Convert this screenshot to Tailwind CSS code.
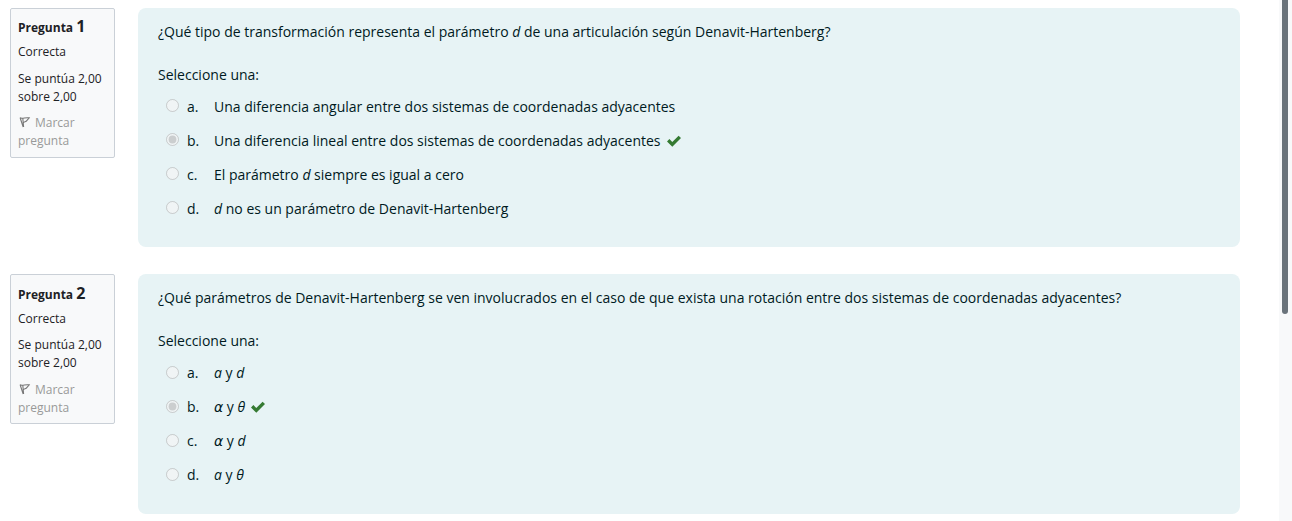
<!DOCTYPE html>
<html lang="es">
<head>
<meta charset="utf-8">
<meta name="viewport" content="width=device-width, initial-scale=1">
<title>Cuestionario</title>
<script src="https://cdn.jsdelivr.net/npm/@tailwindcss/browser@4"></script>
</head>
<body class="flex min-h-screen bg-white font-['Segoe_UI','Open_Sans',sans-serif] text-[14px] text-[#001a1e]">
<svg class="hidden" aria-hidden="true">
  <symbol id="flag" viewBox="0 0 12 12"><path d="M1.200 2 4.200 11M3.800 2.200 4.600 11M.8 1.800C3.500 3.200 6.500 1 10.200 1.900L8 4.400C7 5.800 6 5.600 4.500 6.600" fill="none" stroke="currentColor" stroke-width="1.100"/></symbol>
  <symbol id="check" viewBox="0 0 14 12"><path d="M0 6.500 2.400 4.100 5.300 7 11.600.7 14 3.100 5.300 11.800Z" fill="currentColor"/></symbol>
</svg>
<main class="flex min-w-0 flex-1 flex-col gap-[27px] pt-2 pr-[39px] pb-[7px] pl-[10px]">
  <section class="flex items-start gap-[23px]">
    <div class="w-[105px] shrink-0 rounded-xs border border-[#cad0d7] bg-[#f8f9fa] px-[7px] pt-[5px] pb-[7px] text-[12px] leading-[18px] text-[#1d2125]">
      <h3 class="font-bold leading-6">Pregunta <span class="text-[16px]">1</span></h3>
      <div class="mt-[3px]">Correcta</div>
      <div class="mt-[9px]">Se puntúa 2,00 sobre 2,00</div>
      <a href="#" class="mt-2 block text-[#999]"><svg class="mr-1 ml-px inline size-3 align-[-1px] text-[#777]"><use href="#flag"/></svg>Marcar pregunta</a>
    </div>
    <div class="min-w-0 flex-1 rounded-lg bg-[#e7f3f5] px-5 pt-3 pb-[21px] leading-6">
      <p>¿Qué tipo de transformación representa el parámetro <i>d</i> de una articulación según Denavit-Hartenberg?</p>
      <fieldset class="mt-[19px]">
        <legend class="mb-[3px]">Seleccione una:</legend>
        <div class="flex h-[34px] items-center pl-2"><input id="q1a" name="q1" type="radio" disabled class="mr-2 mb-[3px] size-[13px]"><label for="q1a" class="flex"><span class="w-[27px]">a.</span><span>Una diferencia angular entre dos sistemas de coordenadas adyacentes</span></label></div>
        <div class="flex h-[34px] items-center pl-2"><input id="q1b" name="q1" type="radio" disabled checked class="mr-2 mb-[3px] size-[13px]"><label for="q1b" class="flex"><span class="w-[27px]">b.</span><span>Una diferencia lineal entre dos sistemas de coordenadas adyacentes</span></label><svg class="ml-[6px] h-3 w-[14px] text-[#357a32]" role="img" aria-label="Correcta"><use href="#check"/></svg></div>
        <div class="flex h-[34px] items-center pl-2"><input id="q1c" name="q1" type="radio" disabled class="mr-2 mb-[3px] size-[13px]"><label for="q1c" class="flex"><span class="w-[27px]">c.</span><span>El parámetro <i>d</i> siempre es igual a cero</span></label></div>
        <div class="flex h-[34px] items-center pl-2"><input id="q1d" name="q1" type="radio" disabled class="mr-2 mb-[3px] size-[13px]"><label for="q1d" class="flex"><span class="w-[27px]">d.</span><span><i>d</i> no es un parámetro de Denavit-Hartenberg</span></label></div>
      </fieldset>
    </div>
  </section>
  <section class="flex items-start gap-[23px]">
    <div class="w-[105px] shrink-0 rounded-xs border border-[#cad0d7] bg-[#f8f9fa] px-[7px] pt-[6px] pb-[6px] text-[12px] leading-[18px] text-[#1d2125]">
      <h3 class="font-bold leading-6">Pregunta <span class="text-[16px]">2</span></h3>
      <div class="mt-[3px]">Correcta</div>
      <div class="mt-2">Se puntúa 2,00 sobre 2,00</div>
      <a href="#" class="mt-[9px] block text-[#999]"><svg class="mr-1 ml-px inline size-3 align-[-1px] text-[#777]"><use href="#flag"/></svg>Marcar pregunta</a>
    </div>
    <div class="min-w-0 flex-1 rounded-lg bg-[#e7f3f5] px-5 pt-3 pb-[22px] leading-6">
      <p>¿Qué parámetros de Denavit-Hartenberg se ven involucrados en el caso de que exista una rotación entre dos sistemas de coordenadas adyacentes?</p>
      <fieldset class="mt-[19px]">
        <legend class="mb-[3px]">Seleccione una:</legend>
        <div class="flex h-[34px] items-center pl-2"><input id="q2a" name="q2" type="radio" disabled class="mr-2 mb-px size-[13px]"><label for="q2a" class="flex"><span class="w-[27px]">a.</span><span><i>a</i> y <i>d</i></span></label></div>
        <div class="flex h-[34px] items-center pl-2"><input id="q2b" name="q2" type="radio" disabled checked class="mr-2 mb-px size-[13px]"><label for="q2b" class="flex"><span class="w-[27px]">b.</span><span><i class="font-['DejaVu_Sans',sans-serif]">α</i> y <i>θ</i></span></label><svg class="ml-[6px] h-3 w-[14px] text-[#357a32]" role="img" aria-label="Correcta"><use href="#check"/></svg></div>
        <div class="flex h-[34px] items-center pl-2"><input id="q2c" name="q2" type="radio" disabled class="mr-2 mb-px size-[13px]"><label for="q2c" class="flex"><span class="w-[27px]">c.</span><span><i class="font-['DejaVu_Sans',sans-serif]">α</i> y <i>d</i></span></label></div>
        <div class="flex h-[34px] items-center pl-2"><input id="q2d" name="q2" type="radio" disabled class="mr-2 mb-px size-[13px]"><label for="q2d" class="flex"><span class="w-[27px]">d.</span><span><i>a</i> y <i>θ</i></span></label></div>
      </fieldset>
    </div>
  </section>
</main>
<div class="w-[13px] shrink-0 bg-[#f8f9fa] pl-[3px]" aria-hidden="true"><div class="h-[314px] w-[6px] rounded-b-sm bg-[#6a737b]"></div></div>
</body>
</html>
